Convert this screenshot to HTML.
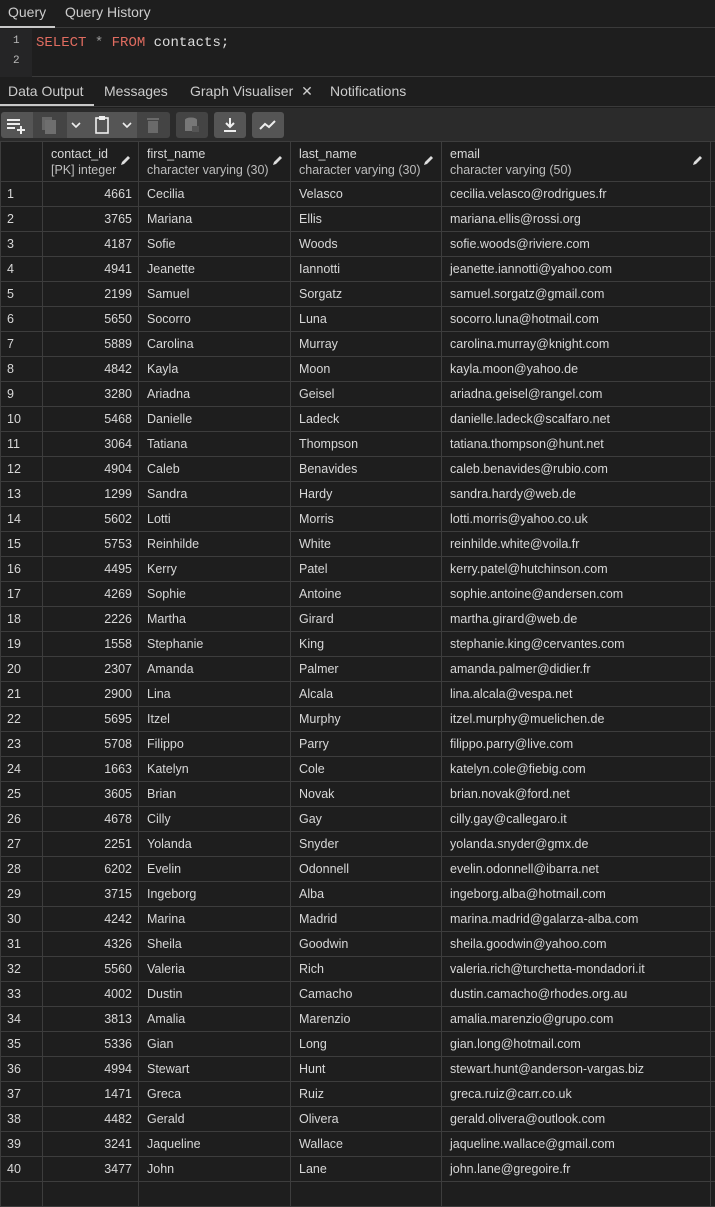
<!DOCTYPE html>
<html><head><meta charset="utf-8">
<style>
*{box-sizing:border-box;margin:0;padding:0}
body{width:715px;height:1188px;overflow:hidden;background:#1e1e1e;color:#dcdcdc;font-family:"Liberation Sans",sans-serif;position:relative}
.top{position:absolute;left:0;top:0;width:715px;height:28px;background:#1e1e1e;border-bottom:1px solid #3a3a3a}
.tab{position:absolute;top:0;height:28px;line-height:25px;font-size:14px;color:#ccc}
.ul{position:absolute;height:2px;background:#c8c8c8}
.editor{position:absolute;left:0;top:29px;width:715px;height:48px;background:#1e1e1e;border-bottom:1px solid #3a3a3a}
.gut{position:absolute;left:0;top:0;width:32px;height:48px;background:#252526}
.ln{position:absolute;left:13px;font-size:11px;color:#bbb;font-family:"Liberation Mono",monospace}
.code{position:absolute;left:36px;top:6px;font-family:"Liberation Mono",monospace;font-size:14px;color:#ddd}
.kw{color:#e06c60}
.tabs2{position:absolute;left:0;top:78px;width:715px;height:29px;background:#1e1e1e;border-bottom:1px solid #3a3a3a}
.toolbar{position:absolute;left:0;top:108px;width:715px;height:33px;background:#2b2b2b}
.btn{position:absolute;top:4px;height:26px;background:#4a4a4a;border-radius:3px}
.grid{position:absolute;left:0;top:141px;width:715px;border-collapse:collapse;table-layout:fixed;font-size:12.5px}
.grid td{border:1px solid #3d3d3d;height:25px;padding:0 8px;white-space:nowrap;overflow:hidden;color:#d8d8d8}
.grid td:first-child{padding-left:6px}
.grid tr.h td{height:40px;vertical-align:middle;line-height:16px;position:relative}
.grid td.n{text-align:right;padding-right:6px}
.sub{color:#bdbdbd}
.pen{position:absolute;right:7px;top:13px}
</style></head><body>
<div class="top">
 <div class="tab" style="left:8px">Query</div>
 <div class="tab" style="left:65px">Query History</div>
 <div class="ul" style="left:0;top:26px;width:55px"></div>
</div>
<div class="editor">
 <div class="gut"><div class="ln" style="top:6px">1</div><div class="ln" style="top:26px">2</div></div>
 <div class="code"><span class="kw">SELECT</span> <span style="color:#999">*</span> <span class="kw">FROM</span> contacts;</div>
</div>
<div class="tabs2">
 <div class="tab" style="left:8px;top:1px">Data Output</div>
 <div class="tab" style="left:104px;top:1px">Messages</div>
 <div class="tab" style="left:190px;top:1px">Graph Visualiser <span style="margin-left:4px">✕</span></div>
 <div class="tab" style="left:330px;top:1px">Notifications</div>
 <div class="ul" style="left:0;top:26px;width:94px"></div>
</div>
<div class="toolbar">
 <div class="btn" style="left:1px;width:32px;background:#555;border-radius:3px 0 0 3px">
  <svg width="32" height="26"><path d="M6 8h13M6 12h13M6 16h8M20 14v8M16 18h8" stroke="#eee" stroke-width="2"/></svg></div>
 <div class="btn" style="left:33px;width:34px;background:#444;border-radius:0">
  <svg width="34" height="26"><rect x="9" y="5" width="10" height="13" fill="#666"/><rect x="12" y="8" width="11" height="14" fill="#6e6e6e"/></svg></div>
 <div class="btn" style="left:67px;width:19px;background:#555;border-radius:0"><svg width="19" height="26"><path d="M5 11l4 4 4-4" stroke="#eee" stroke-width="1.6" fill="none"/></svg></div>
 <div class="btn" style="left:86px;width:32px;background:#555;border-radius:0"><svg width="32" height="26"><rect x="10" y="6" width="12" height="15" fill="none" stroke="#eee" stroke-width="1.6"/><rect x="13" y="4" width="6" height="4" fill="#eee"/></svg></div>
 <div class="btn" style="left:118px;width:19px;background:#555;border-radius:0"><svg width="19" height="26"><path d="M5 11l4 4 4-4" stroke="#eee" stroke-width="1.6" fill="none"/></svg></div>
 <div class="btn" style="left:137px;width:33px;background:#444;border-radius:0 3px 3px 0"><svg width="33" height="26"><rect x="11" y="9" width="10" height="12" fill="#6a6a6a"/><rect x="10" y="6" width="12" height="2" fill="#6a6a6a"/></svg></div>
 <div class="btn" style="left:176px;width:32px;background:#444"><svg width="32" height="26"><ellipse cx="15" cy="8" rx="6" ry="2.5" fill="#777"/><rect x="9" y="8" width="12" height="11" fill="#777"/><rect x="16" y="14" width="7" height="6" fill="#555"/></svg></div>
 <div class="btn" style="left:214px;width:32px;background:#555"><svg width="32" height="26"><path d="M16 6v9M12 11l4 4 4-4" stroke="#eee" stroke-width="2" fill="none"/><path d="M10 19h12" stroke="#eee" stroke-width="2"/></svg></div>
 <div class="btn" style="left:252px;width:32px;background:#555"><svg width="32" height="26"><path d="M8 17l5-5 4 3 6-6" stroke="#eee" stroke-width="2" fill="none"/></svg></div>
</div>
<table class="grid">
<colgroup><col style="width:42px"><col style="width:96px"><col style="width:152px"><col style="width:151px"><col style="width:269px"><col style="width:5px"></colgroup>
<tr class="h"><td></td>
<td>contact_id<br><span class="sub">[PK] integer</span><svg class="pen" width="12" height="12"><path d="M2 10l1-3 6-6 2 2-6 6z" fill="#ddd"/></svg></td>
<td>first_name<br><span class="sub">character varying (30)</span><svg class="pen" width="12" height="12"><path d="M2 10l1-3 6-6 2 2-6 6z" fill="#ddd"/></svg></td>
<td>last_name<br><span class="sub">character varying (30)</span><svg class="pen" width="12" height="12"><path d="M2 10l1-3 6-6 2 2-6 6z" fill="#ddd"/></svg></td>
<td>email<br><span class="sub">character varying (50)</span><svg class="pen" width="12" height="12"><path d="M2 10l1-3 6-6 2 2-6 6z" fill="#ddd"/></svg></td><td style="padding:0"></td></tr>
<tr><td>1</td><td class="n">4661</td><td>Cecilia</td><td>Velasco</td><td>cecilia.velasco@rodrigues.fr</td><td></td></tr>
<tr><td>2</td><td class="n">3765</td><td>Mariana</td><td>Ellis</td><td>mariana.ellis@rossi.org</td><td></td></tr>
<tr><td>3</td><td class="n">4187</td><td>Sofie</td><td>Woods</td><td>sofie.woods@riviere.com</td><td></td></tr>
<tr><td>4</td><td class="n">4941</td><td>Jeanette</td><td>Iannotti</td><td>jeanette.iannotti@yahoo.com</td><td></td></tr>
<tr><td>5</td><td class="n">2199</td><td>Samuel</td><td>Sorgatz</td><td>samuel.sorgatz@gmail.com</td><td></td></tr>
<tr><td>6</td><td class="n">5650</td><td>Socorro</td><td>Luna</td><td>socorro.luna@hotmail.com</td><td></td></tr>
<tr><td>7</td><td class="n">5889</td><td>Carolina</td><td>Murray</td><td>carolina.murray@knight.com</td><td></td></tr>
<tr><td>8</td><td class="n">4842</td><td>Kayla</td><td>Moon</td><td>kayla.moon@yahoo.de</td><td></td></tr>
<tr><td>9</td><td class="n">3280</td><td>Ariadna</td><td>Geisel</td><td>ariadna.geisel@rangel.com</td><td></td></tr>
<tr><td>10</td><td class="n">5468</td><td>Danielle</td><td>Ladeck</td><td>danielle.ladeck@scalfaro.net</td><td></td></tr>
<tr><td>11</td><td class="n">3064</td><td>Tatiana</td><td>Thompson</td><td>tatiana.thompson@hunt.net</td><td></td></tr>
<tr><td>12</td><td class="n">4904</td><td>Caleb</td><td>Benavides</td><td>caleb.benavides@rubio.com</td><td></td></tr>
<tr><td>13</td><td class="n">1299</td><td>Sandra</td><td>Hardy</td><td>sandra.hardy@web.de</td><td></td></tr>
<tr><td>14</td><td class="n">5602</td><td>Lotti</td><td>Morris</td><td>lotti.morris@yahoo.co.uk</td><td></td></tr>
<tr><td>15</td><td class="n">5753</td><td>Reinhilde</td><td>White</td><td>reinhilde.white@voila.fr</td><td></td></tr>
<tr><td>16</td><td class="n">4495</td><td>Kerry</td><td>Patel</td><td>kerry.patel@hutchinson.com</td><td></td></tr>
<tr><td>17</td><td class="n">4269</td><td>Sophie</td><td>Antoine</td><td>sophie.antoine@andersen.com</td><td></td></tr>
<tr><td>18</td><td class="n">2226</td><td>Martha</td><td>Girard</td><td>martha.girard@web.de</td><td></td></tr>
<tr><td>19</td><td class="n">1558</td><td>Stephanie</td><td>King</td><td>stephanie.king@cervantes.com</td><td></td></tr>
<tr><td>20</td><td class="n">2307</td><td>Amanda</td><td>Palmer</td><td>amanda.palmer@didier.fr</td><td></td></tr>
<tr><td>21</td><td class="n">2900</td><td>Lina</td><td>Alcala</td><td>lina.alcala@vespa.net</td><td></td></tr>
<tr><td>22</td><td class="n">5695</td><td>Itzel</td><td>Murphy</td><td>itzel.murphy@muelichen.de</td><td></td></tr>
<tr><td>23</td><td class="n">5708</td><td>Filippo</td><td>Parry</td><td>filippo.parry@live.com</td><td></td></tr>
<tr><td>24</td><td class="n">1663</td><td>Katelyn</td><td>Cole</td><td>katelyn.cole@fiebig.com</td><td></td></tr>
<tr><td>25</td><td class="n">3605</td><td>Brian</td><td>Novak</td><td>brian.novak@ford.net</td><td></td></tr>
<tr><td>26</td><td class="n">4678</td><td>Cilly</td><td>Gay</td><td>cilly.gay@callegaro.it</td><td></td></tr>
<tr><td>27</td><td class="n">2251</td><td>Yolanda</td><td>Snyder</td><td>yolanda.snyder@gmx.de</td><td></td></tr>
<tr><td>28</td><td class="n">6202</td><td>Evelin</td><td>Odonnell</td><td>evelin.odonnell@ibarra.net</td><td></td></tr>
<tr><td>29</td><td class="n">3715</td><td>Ingeborg</td><td>Alba</td><td>ingeborg.alba@hotmail.com</td><td></td></tr>
<tr><td>30</td><td class="n">4242</td><td>Marina</td><td>Madrid</td><td>marina.madrid@galarza-alba.com</td><td></td></tr>
<tr><td>31</td><td class="n">4326</td><td>Sheila</td><td>Goodwin</td><td>sheila.goodwin@yahoo.com</td><td></td></tr>
<tr><td>32</td><td class="n">5560</td><td>Valeria</td><td>Rich</td><td>valeria.rich@turchetta-mondadori.it</td><td></td></tr>
<tr><td>33</td><td class="n">4002</td><td>Dustin</td><td>Camacho</td><td>dustin.camacho@rhodes.org.au</td><td></td></tr>
<tr><td>34</td><td class="n">3813</td><td>Amalia</td><td>Marenzio</td><td>amalia.marenzio@grupo.com</td><td></td></tr>
<tr><td>35</td><td class="n">5336</td><td>Gian</td><td>Long</td><td>gian.long@hotmail.com</td><td></td></tr>
<tr><td>36</td><td class="n">4994</td><td>Stewart</td><td>Hunt</td><td>stewart.hunt@anderson-vargas.biz</td><td></td></tr>
<tr><td>37</td><td class="n">1471</td><td>Greca</td><td>Ruiz</td><td>greca.ruiz@carr.co.uk</td><td></td></tr>
<tr><td>38</td><td class="n">4482</td><td>Gerald</td><td>Olivera</td><td>gerald.olivera@outlook.com</td><td></td></tr>
<tr><td>39</td><td class="n">3241</td><td>Jaqueline</td><td>Wallace</td><td>jaqueline.wallace@gmail.com</td><td></td></tr>
<tr><td>40</td><td class="n">3477</td><td>John</td><td>Lane</td><td>john.lane@gregoire.fr</td><td></td></tr>
<tr><td></td><td></td><td></td><td></td><td></td><td></td></tr>
</table>
</body></html>
